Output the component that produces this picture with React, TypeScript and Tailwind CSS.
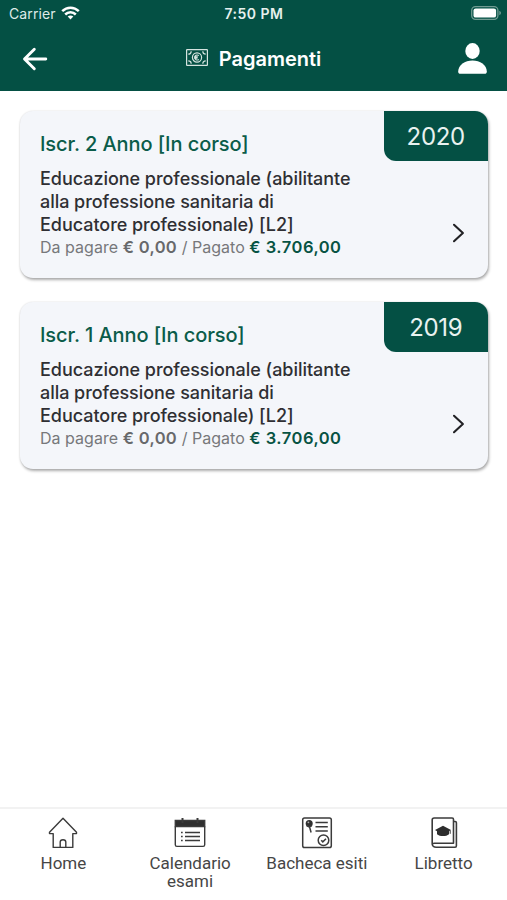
import React from 'react';

type Payment = { title: string; year: string };

const payments: Payment[] = [
  { title: 'Iscr. 2 Anno [In corso]', year: '2020' },
  { title: 'Iscr. 1 Anno [In corso]', year: '2019' },
];

function StatusBar() {
  return (
    <div className="grid h-7 grid-cols-3 items-center pl-[9px] pr-[5px] text-white">
      <div className="flex items-center gap-[5px]">
        <span className="text-[14px] leading-5 tracking-[0.1px] text-[#dfebe8]">Carrier</span>
        <svg className="-mt-0.5" width="19" height="14" viewBox="0 0 19 14" fill="none" stroke="currentColor" strokeWidth="2.5">
          <path d="M1.2 5.2C6 .6 13 .6 17.8 5.2" />
          <path d="M4.2 8.5c3-3 7.6-3 10.6 0" />
          <path d="M9.5 13.4 6.7 10.6c1.6-1.4 4-1.4 5.6 0z" fill="currentColor" stroke="none" />
        </svg>
      </div>
      <span className="-ml-[3px] text-center text-[14px] font-semibold leading-5 tracking-[0.5px] text-[#e6f0ee]">7:50 PM</span>
      <svg className="-mt-0.5 justify-self-end" width="31" height="14" viewBox="0 0 31 14">
        <rect x=".7" y=".7" width="26.2" height="12.6" rx="3.8" fill="none" stroke="#719b92" strokeWidth="1.3" />
        <rect x="2.5" y="2.4" width="22.6" height="9.2" rx="2.2" fill="#fff" />
        <path d="M28.3 4.8c2.2.8 2.2 3.6 0 4.4z" fill="#719b92" />
      </svg>
    </div>
  );
}

function BanknoteIcon() {
  return (
    <svg width="22" height="17" viewBox="0 0 22 17" fill="none" stroke="#d5e4e0" strokeWidth="1.2">
      <rect x=".6" y=".6" width="20.8" height="15.8" rx=".5" />
      <path d="M2.3 5.2c1.7 0 2.9-1 2.9-2.9M19.7 5.2c-1.7 0-2.9-1-2.9-2.9M2.3 11.8c1.7 0 2.9 1 2.9 2.9M19.7 11.8c-1.7 0-2.9 1-2.9 2.9" />
      <circle cx="11" cy="8.5" r="4.6" />
      <path d="M12.900 6.600c-2.500-1.500-4 .2-4 1.900s1.500 3.400 4 1.900M8.100 7.900h3.700M8.100 9.200h3.400" />
    </svg>
  );
}

function Header() {
  return (
    <header className="h-[91px] bg-[#045044] text-white">
      <StatusBar />
      <div className="grid h-[61px] grid-cols-[150px_1fr_150px] items-center">
        <svg className="ml-[22px]" width="26" height="24" viewBox="0 0 26 24" fill="none" stroke="currentColor" strokeWidth="2.9" strokeLinecap="round" strokeLinejoin="round">
          <path d="M12.3 2.2 2.5 12l9.800 9.800M3 12h20.800" />
        </svg>
        <h1 className="flex items-center justify-center gap-[11px] text-[20px] font-semibold leading-6">
          <span className="-mt-[3px]"><BanknoteIcon /></span>
          Pagamenti
        </h1>
        <svg className="mr-5 justify-self-end" width="29" height="31" viewBox="0 0 29 31" fill="#fff">
          <ellipse cx="14.5" cy="8" rx="7.2" ry="7.9" />
          <path d="M.2 28.500C.2 21.800 7 17.400 14.500 17.400s14.300 4.400 14.300 11.100c0 1.600-.7 2.300-2.200 2.300H2.400C.9 30.800.2 30.100.2 28.500z" />
        </svg>
      </div>
    </header>
  );
}

function PaymentCard({ title, year }: Payment) {
  return (
    <article className="relative h-[167px] overflow-hidden rounded-[13px] bg-[#f4f6fa] pl-5 pt-5 shadow-[1px_2px_3px_rgba(0,0,0,0.32),0_0_2px_rgba(0,0,0,0.12)]">
      <div className="absolute right-0 top-0 flex h-[50px] w-[104.5px] items-center justify-center rounded-bl-[12px] bg-[#045044] pt-0.5 text-[24px] leading-7 tracking-[-0.3px] text-[#e9f2f0]">
        {year}
      </div>
      <h2 className="whitespace-nowrap text-[20px] font-medium leading-[26px] tracking-[-0.08px] text-[#0b5c49]">{title}</h2>
      <p className="mt-[10px] whitespace-nowrap text-[18px] font-medium leading-[23.2px] tracking-[-0.04px] text-[#2f2f33]">
        Educazione professionale (abilitante
        <br />
        alla professione sanitaria di
        <br />
        Educatore professionale) [L2]
      </p>
      <p className="-mt-px whitespace-nowrap text-[16px] leading-[22px] tracking-[0.03px] text-[#77787a]">
        Da pagare <b className="text-[16.5px] font-semibold tracking-[0.35px] text-[#68696b]">€ 0,00</b> / Pagato{' '}
        <b className="text-[16.5px] font-semibold tracking-[0.5px] text-[#075343]">€ 3.706,00</b>
      </p>
      <svg className="absolute right-[23px] top-[112px]" width="13" height="20" viewBox="0 0 13 20" fill="none" stroke="#222225" strokeWidth="2.1" strokeLinecap="round" strokeLinejoin="round">
        <path d="m2 1.800 8.900 8.200L2 18.200" />
      </svg>
    </article>
  );
}

function HomeIcon() {
  return (
    <svg width="32" height="32" viewBox="0 0 32 32" fill="none" stroke="#3b3b3b" strokeWidth="1.4" strokeLinejoin="round">
      <path d="M16 1.200 2.500 15.300v1.300h3.700v13.800h19.600V16.600h3.700v-1.300z" />
      <path d="M13.200 30.200v-5.100c0-1.500 1-2.300 2.800-2.300s2.800.8 2.800 2.300v5.100" />
    </svg>
  );
}

function CalendarIcon() {
  return (
    <svg width="32" height="32" viewBox="0 0 32 32" fill="none" stroke="#3b3b3b" strokeWidth="1.4">
      <path d="M1.300 3.500h29.400v6H1.300z" fill="#2f2f2f" />
      <path d="M1.300 9.500v18.300c0 1 .6 1.600 1.600 1.600h26.200c1 0 1.600-.6 1.600-1.600V9.500" />
      <path d="M8.500 1v5M23.500 1v5" strokeWidth="2" />
      <path d="M11 15.500h15M11 19.500h15M11 23.500h15" strokeWidth="1.5" />
      <path d="M7 15.500h1.700M7 19.500h1.700M7 23.500h1.700" strokeWidth="1.7" />
    </svg>
  );
}

function BoardIcon() {
  return (
    <svg width="32" height="32" viewBox="0 0 32 32" fill="none" stroke="#3b3b3b" strokeWidth="1.5">
      <rect x="1.7" y="1" width="28.6" height="29.5" rx="1.8" />
      <circle cx="8.2" cy="6.4" r="3.5" fill="#303030" stroke="none" />
      <path d="M5.800 8.500 8.400 10l2.400-1.700M8.300 9l1.800 6.500" />
      <circle cx="7.4" cy="5.3" r=".9" fill="#aaa" stroke="none" />
      <path d="M14.500 5.400h12.300M14.500 9.700h12.300M14.500 13.900h12.300" />
      <circle cx="22.5" cy="23.3" r="5.3" />
      <path d="m20.200 23.300 1.600 1.600 3.200-3.200" />
    </svg>
  );
}

function BookletIcon() {
  return (
    <svg width="32" height="32" viewBox="0 0 32 32" fill="none" stroke="#3b3b3b" strokeWidth="1.6" strokeLinejoin="round">
      <path d="M25.500 4.500h1.700c.8 0 1.200.4 1.200 1.200v23c0 .8-.5 1.500-1.300 1.500H8.200c-2.200 0-4-1.300-4-3.400V3c0-1.200.8-2 2-2h18c.9 0 1.300.5 1.300 1.400v23.800H6.300c-1.200 0-2.100.8-2.100 1.500" />
      <path d="m15 8.800 8 4.200-2 1.200v3c-2.900 2.500-9 2.500-12 0v-3L7 13z" fill="#2d2d2d" stroke="none" />
      <path d="M22.200 13.300v3.500" strokeWidth="1" />
    </svg>
  );
}

const tabs: { icon: React.ReactNode; lines: string[] }[] = [
  { icon: <HomeIcon />, lines: ['Home'] },
  { icon: <CalendarIcon />, lines: ['Calendario', 'esami'] },
  { icon: <BoardIcon />, lines: ['Bacheca esiti'] },
  { icon: <BookletIcon />, lines: ['Libretto'] },
];

export default function App() {
  return (
    <div className="flex h-[900px] w-[507px] flex-col overflow-hidden bg-white font-['Inter',sans-serif]">
      <Header />
      <main className="flex flex-1 flex-col gap-6 pl-5 pr-[19px] pt-5">
        {payments.map((p) => (
          <PaymentCard key={p.year} {...p} />
        ))}
      </main>
      <nav className="grid h-[93px] grid-cols-4 border-t-2 border-[#f2f2f2] bg-white pt-2 font-['Roboto',sans-serif]">
        {tabs.map((tab) => (
          <div key={tab.lines[0]} className="flex flex-col items-center text-center text-[17px] leading-[18px] text-[#464646]">
            {tab.icon}
            <div className="mt-[5px] whitespace-nowrap">
              {tab.lines.map((line) => (
                <div key={line}>{line}</div>
              ))}
            </div>
          </div>
        ))}
      </nav>
    </div>
  );
}
